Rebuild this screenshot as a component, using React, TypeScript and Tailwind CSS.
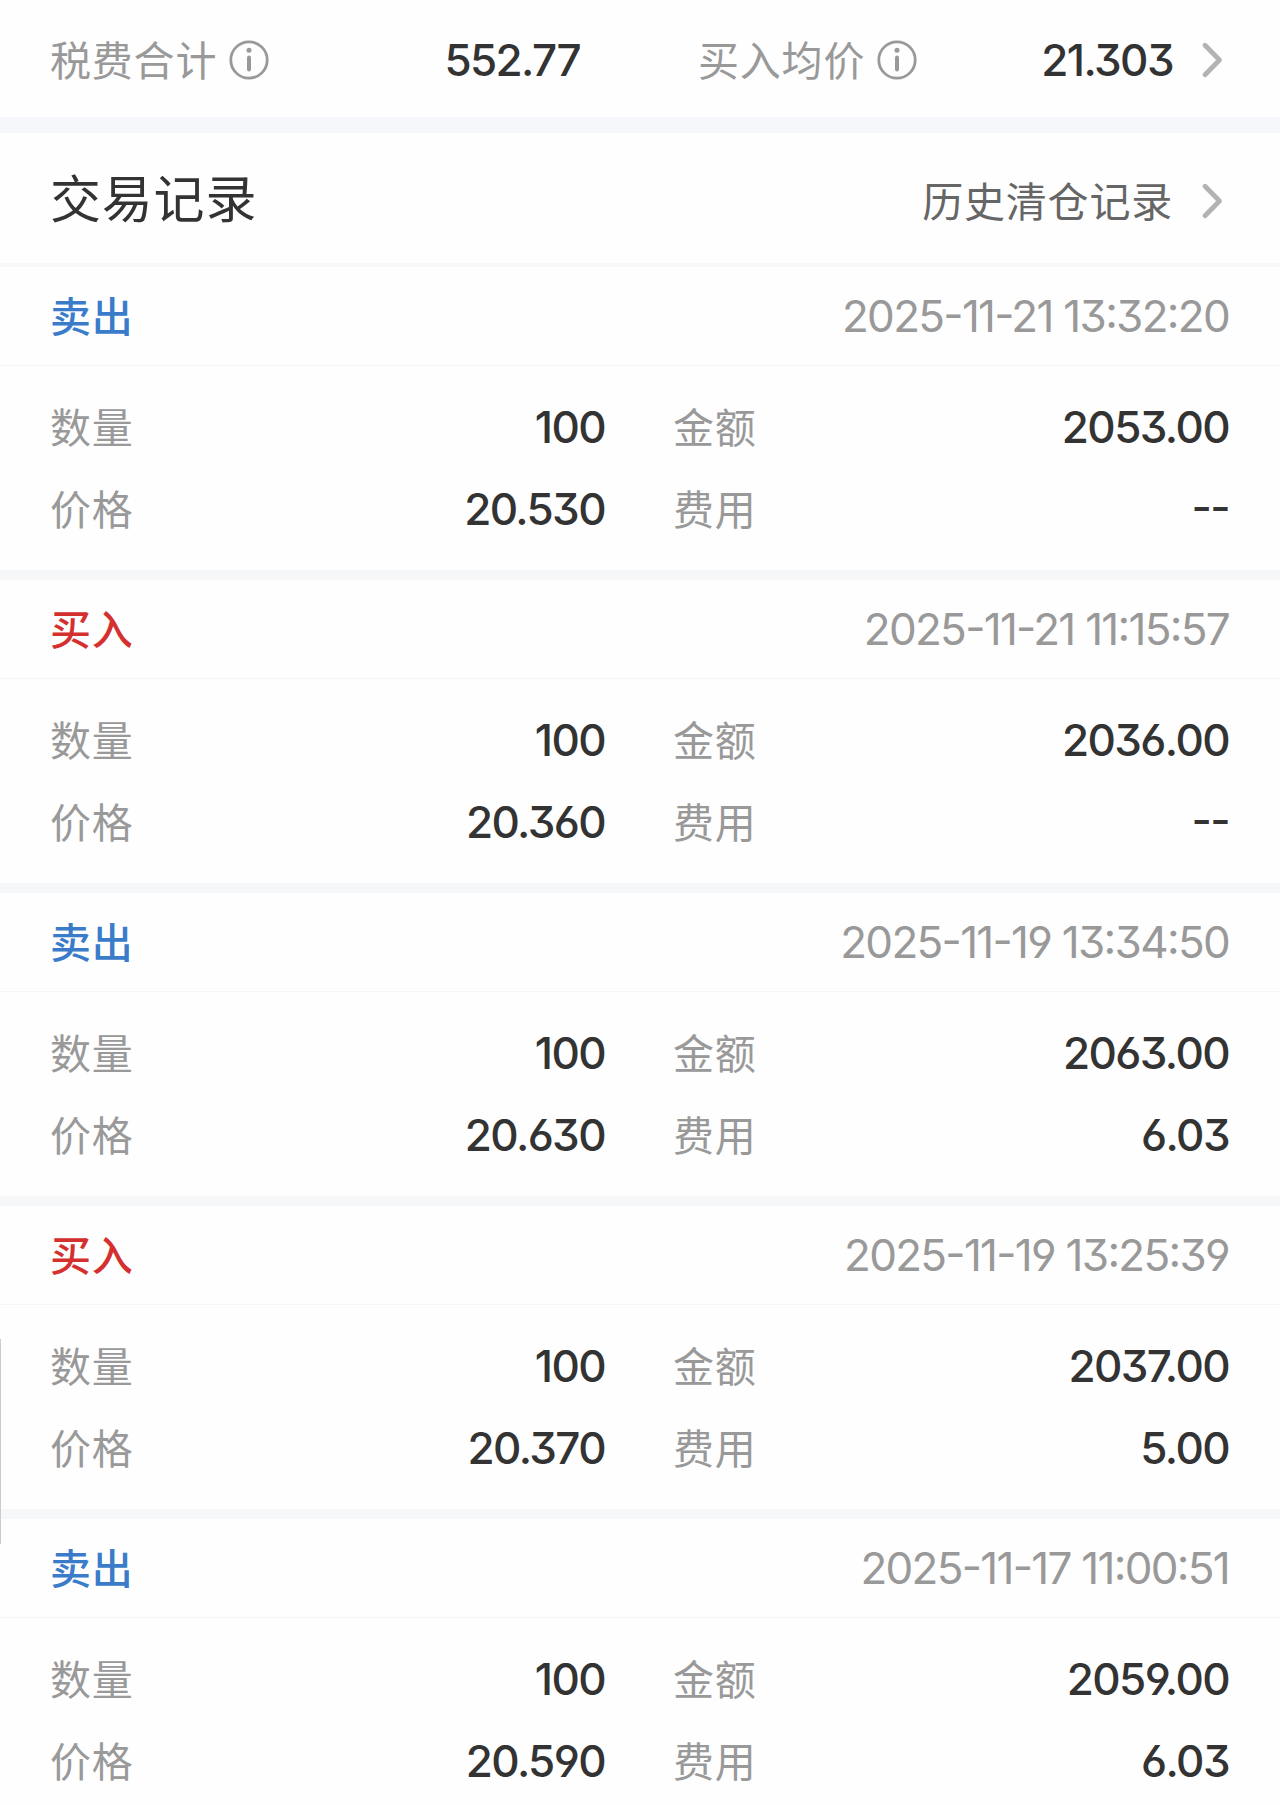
interface Trade {
  side: "buy" | "sell";
  time: string;
  quantity: string;
  amount: string;
  price: string;
  fee: string;
}

const trades: Trade[] = [
  { side: "sell", time: "2025-11-21 13:32:20", quantity: "100", amount: "2053.00", price: "20.530", fee: "--" },
  { side: "buy", time: "2025-11-21 11:15:57", quantity: "100", amount: "2036.00", price: "20.360", fee: "--" },
  { side: "sell", time: "2025-11-19 13:34:50", quantity: "100", amount: "2063.00", price: "20.630", fee: "6.03" },
  { side: "buy", time: "2025-11-19 13:25:39", quantity: "100", amount: "2037.00", price: "20.370", fee: "5.00" },
  { side: "sell", time: "2025-11-17 11:00:51", quantity: "100", amount: "2059.00", price: "20.590", fee: "6.03" },
];

function InfoIcon() {
  return (
    <svg className="w-10 h-10 ml-3 text-[#999999]" viewBox="0 0 40 40" fill="none" stroke="currentColor" strokeWidth="2.8" strokeLinecap="round">
      <circle cx="20" cy="20" r="18.2" />
      <path d="M20 17.5v12" strokeWidth="4" />
      <circle cx="20" cy="10.2" r="2.5" fill="currentColor" stroke="none" />
    </svg>
  );
}

function Chevron() {
  return (
    <svg className="w-6 h-10 text-[#b3b3b3]" viewBox="0 0 24 40" fill="none" stroke="currentColor" strokeWidth="4.8" strokeLinecap="round" strokeLinejoin="round">
      <path d="M5 5.2l14.5 14.8L5 34.8" />
    </svg>
  );
}

function Label({ children }: { children: string }) {
  return <span className="pb-[3px] text-[#999999]">{children}</span>;
}

function Value({ children }: { children: string }) {
  return (
    <span className="font-['Inter',sans-serif] text-[44px] font-[450] tracking-[-1.6px] text-[#333333] [font-feature-settings:'cv09','cv03','cv04','case']">
      {children}
    </span>
  );
}

function Field({ label, value }: { label: string; value: string }) {
  return (
    <div className="flex h-[82px] items-center justify-between">
      <Label>{label}</Label>
      <Value>{value}</Value>
    </div>
  );
}

function TradeRecord({ trade }: { trade: Trade }) {
  const sell = trade.side === "sell";

  return (
    <section className="h-[313px] shrink-0 border-b-[10px] border-[#f6f7f9]">
      <div className="flex h-[99px] items-center justify-between border-b border-[#f5f5f5] pl-[50px] pr-[51px]">
        <span className={sell ? "pb-[3px] font-medium text-[#3a7cc9]" : "pb-[3px] font-medium text-[#d43030]"}>
          {sell ? "卖出" : "买入"}
        </span>
        <span className="font-['Inter',sans-serif] text-[44px] tracking-[-1.7px] text-[#999999] [font-feature-settings:'cv09','cv03','cv04','case']">
          {trade.time}
        </span>
      </div>
      <div className="grid grid-cols-[555px_556px] gap-x-[68px] pl-[50px] pt-[20px]">
        <Field label="数量" value={trade.quantity} />
        <Field label="金额" value={trade.amount} />
        <Field label="价格" value={trade.price} />
        <Field label="费用" value={trade.fee} />
      </div>
    </section>
  );
}

export default function App() {
  return (
    <main className="relative flex h-[1805px] w-[1280px] flex-col overflow-hidden bg-[#fefefe] font-['Noto_Sans_CJK_SC',sans-serif] text-[41px] leading-none tracking-[0.8px] whitespace-nowrap">
      {/* Summary */}
      <div className="flex h-[133px] shrink-0 items-center border-b-[16px] border-[#f6f7fa] pl-[50px] pt-[2px]">
        <div className="flex w-[530px] items-center">
          <Label>税费合计</Label>
          <InfoIcon />
          <div className="ml-auto flex"><Value>552.77</Value></div>
        </div>
        <div className="ml-[118px] flex w-[475px] items-center">
          <Label>买入均价</Label>
          <InfoIcon />
          <div className="ml-auto flex"><Value>21.303</Value></div>
        </div>
        <div className="ml-[27px] flex">
          <Chevron />
        </div>
      </div>

      {/* Section title */}
      <div className="flex h-[134px] shrink-0 items-center border-b-4 border-[#f7f8f8] pl-[50px] pr-[56px]">
        <h1 className="pb-[3px] text-[51px] font-normal text-[#333333]">交易记录</h1>
        <div className="ml-auto flex items-center gap-[27px] pt-[5px]">
          <span className="pb-[3px] text-[#666666]">历史清仓记录</span>
          <Chevron />
        </div>
      </div>

      {trades.map((trade) => (
        <TradeRecord key={trade.time} trade={trade} />
      ))}

      {/* Scroll indicator */}
      <div className="absolute left-0 top-[1339px] h-[205px] w-px bg-[#cccccc]" />
    </main>
  );
}
